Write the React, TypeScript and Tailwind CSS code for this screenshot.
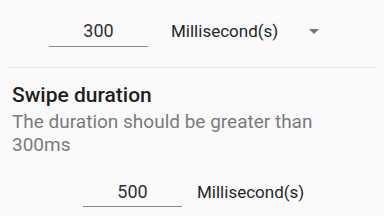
export default function App() {
  return (
    <div
      className="w-[384px] h-[216px] overflow-hidden bg-[#fafafa]"
      style={{ fontFamily: 'Roboto, "Noto Sans", sans-serif' }}
    >
      {/* First duration row */}
      <div className="flex items-baseline pt-[18px] pl-[49px]">
        <div className="w-[99px] border-b border-[#8a8a8a] text-center text-[18px] leading-[26px] text-[#303030] pb-[2px]">
          300
        </div>
        <div className="ml-[23px] text-[17px] leading-[22px] text-[#262626]">
          Millisecond(s)
        </div>
        <svg className="self-start ml-[31px] mt-[11px]" width="10" height="5" viewBox="0 0 10 5">
          <path d="M0 0h10L5 5z" fill="#757575" />
        </svg>
      </div>

      <div className="mx-[8px] mt-[20px] border-t border-[#e4e4e4]" />

      {/* Swipe duration */}
      <div className="px-[12px] pt-[15px]">
        <div className="text-[21px] leading-[24px] font-medium text-[#1f1f1f]">Swipe duration</div>
        <div className="mt-[3px] text-[19px] leading-[23px] text-[#7a7a7a] w-[330px]">
          The duration should be greater than 300ms
        </div>
      </div>

      <div className="flex items-baseline pl-[83px] mt-[23px]">
        <div className="w-[99px] border-b border-[#8a8a8a] text-center text-[18px] leading-[26px] text-[#303030] pb-[1px]">
          500
        </div>
        <div className="ml-[15px] text-[17px] leading-[22px] text-[#262626]">
          Millisecond(s)
        </div>
      </div>
    </div>
  );
}
